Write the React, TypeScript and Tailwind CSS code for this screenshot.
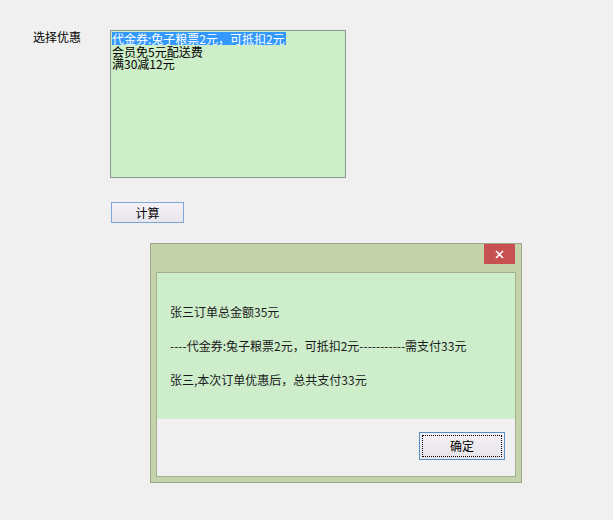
import React from "react";

const font = { fontFamily: '"Noto Sans CJK SC", "Noto Sans", sans-serif' };

const coupons = ["代金券:兔子粮票2元，可抵扣2元", "会员免5元配送费", "满30减12元"];

function CouponList() {
  return (
    <div className="w-[236px] h-[148px] border border-[#8a9894] bg-[#cdeec9] pl-[1px] pt-[1px]">
      {coupons.map((c, i) => (
        <div
          key={c}
          className={
            i === 0
              ? "w-fit h-[13px] leading-[13px] pr-[1px] bg-[#3399ff] text-white text-[12px]"
              : "w-fit h-[12px] leading-[13px] text-black text-[12px]"
          }
        >
          {c}
        </div>
      ))}
    </div>
  );
}

function ResultDialog() {
  return (
    <div className="absolute left-[150px] top-[243px] w-[372px] h-[240px] border border-[#9ea890] bg-[#c5d3ab] flex flex-col">
      <div className="h-[28px] shrink-0 flex justify-end pr-[6px]">
        <div className="w-[31px] h-[20px] bg-[#c75050] flex items-center justify-center">
          <svg width="9" height="9" viewBox="0 0 9 9">
            <path d="M1 1 L8 8 M8 1 L1 8" stroke="#ffffff" strokeWidth="1.6" />
          </svg>
        </div>
      </div>
      <div className="mx-[5px] mb-[5px] flex-1 border border-[#a3b08e] flex flex-col">
        <div className="h-[146px] bg-[#cdedcb] pl-[13px] pt-[31px] flex flex-col gap-[19px] text-[12px] leading-[15px] text-[#1a1a1a]">
          <div>张三订单总金额35元</div>
          <div>----代金券:兔子粮票2元，可抵扣2元-----------需支付33元</div>
          <div>张三,本次订单优惠后，总共支付33元</div>
        </div>
        <div className="flex-1 bg-[#f0f0f0] flex justify-end items-start pt-[13px] pr-[10px]">
          <button className="w-[86px] h-[28px] border border-[#5b8fc4] bg-gradient-to-b from-[#f3f1f5] to-[#e6e3ea] p-[2px]">
            <div className="w-full h-full border border-dotted border-black flex items-center justify-center text-[12px] text-black">
              确定
            </div>
          </button>
        </div>
      </div>
    </div>
  );
}

export default function App() {
  return (
    <div className="relative w-[613px] h-[520px] bg-[#f0f0f0] overflow-hidden" style={font}>
      <div className="flex pl-[33px] pt-[30px]">
        <div className="w-[77px] text-[12px] leading-[14px] text-black">选择优惠</div>
        <div className="flex flex-col">
          <CouponList />
          <button className="mt-[24px] ml-[1px] w-[73px] h-[21px] border border-[#7ea6d8] bg-gradient-to-b from-[#f4f2f6] to-[#e7e4ec] text-[12px] text-black flex items-center justify-center">
            计算
          </button>
        </div>
      </div>
      <ResultDialog />
    </div>
  );
}
